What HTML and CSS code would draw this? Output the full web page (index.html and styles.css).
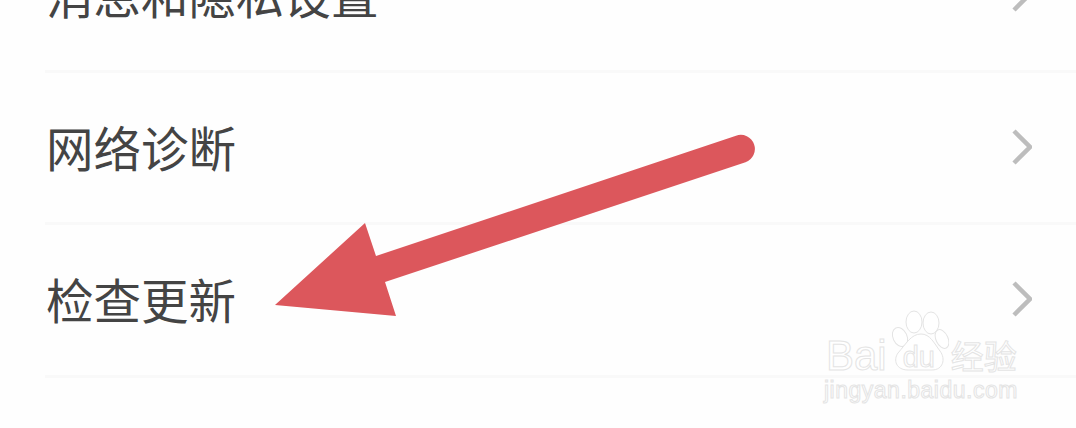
FILE: index.html
```html
<!DOCTYPE html>
<html lang="zh-CN">
<head>
<meta charset="utf-8">
<title>设置</title>
<link rel="stylesheet" href="styles.css">
</head>
<body>
<main class="viewport">
  <ul class="list">
    <li class="row"><span class="label">消息和隐私设置</span><svg class="chev" viewBox="0 0 20 36"><path d="M2 2 L18 18 L2 34"/></svg></li>
    <li class="row"><span class="label">网络诊断</span><svg class="chev" viewBox="0 0 20 36"><path d="M2 2 L18 18 L2 34"/></svg></li>
    <li class="row"><span class="label">检查更新</span><svg class="chev" viewBox="0 0 20 36"><path d="M2 2 L18 18 L2 34"/></svg></li>
  </ul>
  <svg class="arrow" viewBox="0 0 1076 428"><path d="M275 305 L365 223 L376 256 L736 135.700 A14 14 0 0 1 745.500 162.300 L385 282 L396 316 Z"/></svg>
  <div class="mark">
    <div class="mark-top">
      <span class="mark-bai">Bai</span>
      <span class="paw">
        <svg viewBox="0 0 59 62"><g><ellipse cx="24" cy="12" rx="8" ry="11"/><ellipse cx="41" cy="13" rx="8" ry="11"/><ellipse cx="10" cy="27" rx="7" ry="10" transform="rotate(-25 10 27)"/><ellipse cx="52" cy="29" rx="6" ry="10" transform="rotate(-25 52 29)"/><path d="M31 24 C40 24 44 33 50 41 C56 49 53 60 42 60 L18 60 C6 60 3 50 8 43 C16 34 21 24 31 24 Z"/></g></svg>
        <span class="mark-du">du</span>
      </span>
      <span class="mark-cn">经验</span>
    </div>
    <div class="mark-url">jingyan.baidu.com</div>
  </div>
</main>
</body>
</html>
```

FILE: styles.css
```css
html, body {
  margin: 0;
  padding: 0;
  background: #fff;
}
.viewport {
  position: relative;
  width: 1076px;
  height: 428px;
  overflow: hidden;
  background: #fefefe;
}
.list {
  list-style: none;
  margin: -80px 0 0 45px;
  padding: 0;
}
.row {
  display: flex;
  align-items: center;
  justify-content: space-between;
  height: 149.700px;
  padding: 0 45px 0 1px;
  border-bottom: 3px solid #f9f9f9;
  box-sizing: content-box;
}
.label {
  font: 400 47.500px/60px "Noto Sans CJK SC", "Noto Sans", sans-serif;
  color: #444;
  letter-spacing: 0;
  position: relative;
  top: -1px;
}
.chev {
  width: 20px;
  height: 36px;
  margin-right: -1px;
  margin-bottom: 2px;
  filter: blur(0.4px);
}
.chev path {
  fill: none;
  stroke: #bdbdbd;
  stroke-width: 4.500px;
  stroke-linecap: butt;
  stroke-linejoin: miter;
}
.arrow {
  position: absolute;
  left: 0;
  top: 0;
  width: 1076px;
  height: 428px;
}
.arrow path {
  fill: #dc575c;
}
.mark {
  position: absolute;
  left: 826px;
  top: 310px;
  width: 200px;
  color: #fff;
  -webkit-text-stroke: 1px #e4e4e4;
  font-family: "Liberation Sans", sans-serif;
}
.mark-top {
  display: flex;
  align-items: flex-end;
  height: 62px;
}
.mark-bai {
  font-size: 42px;
  line-height: 46px;
  margin-bottom: -7px;
}
.paw {
  position: relative;
  flex: none;
  width: 59px;
  height: 62px;
  margin-left: 3px;
}
.paw svg {
  display: block;
  width: 59px;
  height: 62px;
}
.paw svg g {
  fill: #fff;
  stroke: #e4e4e4;
  stroke-width: 1;
}
.mark-du {
  position: absolute;
  left: 13px;
  top: 32px;
  font-size: 29px;
  line-height: 30px;
}
.mark-cn {
  font-family: "Noto Sans CJK SC", sans-serif;
  font-size: 33px;
  line-height: 40px;
  margin-left: 2px;
  margin-bottom: -3px;
  flex: none;
}
.mark-url {
  font-size: 23px;
  line-height: 26px;
  letter-spacing: 0.500px;
  margin-top: 5px;
  margin-left: -2px;
}
```
